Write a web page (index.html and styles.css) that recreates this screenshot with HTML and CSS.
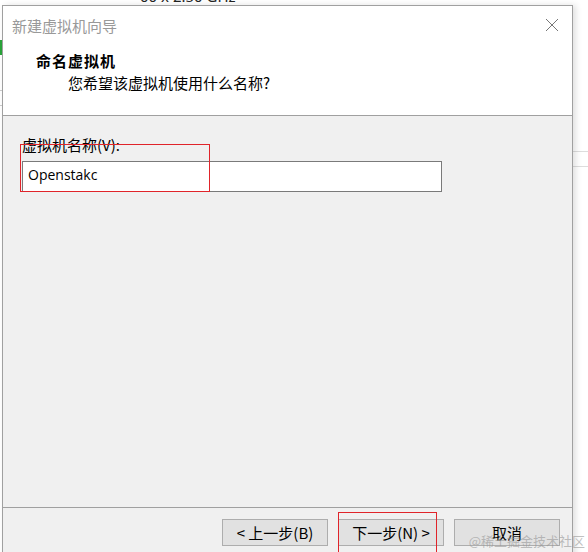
FILE: index.html
```
<!DOCTYPE html>
<html>
	<head>
		<meta charset="utf-8">
		<title>新建虚拟机向导</title>
		<link rel="stylesheet" href="styles.css">
	</head>
	<body>
		<!-- 后面的窗口 只露出一点边 -->
		<div class="behind">
			<div class="cpu">00 x 2.50 GHz</div>
			<div class="green"></div>
			<div class="line line1"></div>
			<div class="line line2"></div>
			<div class="rline rline1"></div>
			<div class="rline rline2"></div>
			<div class="mark">@稀土掘金技术社区</div>
		</div>

		<div class="wizard">
			<div class="wz_hd">
				<div class="title_bar">
					<span class="title">新建虚拟机向导</span>
					<svg class="close" width="14" height="14" viewBox="0 0 14 14">
						<path d="M1 1L13 13M13 1L1 13" stroke="#777" stroke-width="1" fill="none"/>
					</svg>
				</div>
				<h2>命名虚拟机</h2>
				<p>您希望该虚拟机使用什么名称?</p>
			</div>
			<div class="wz_bd">
				<label>虚拟机名称(V):</label>
				<div class="name_box">Openstakc</div>
				<div class="red red1"></div>
			</div>
			<div class="wz_ft">
				<button type="button">&lt; 上一步(B)</button>
				<button type="button">下一步(N) &gt;</button>
				<button type="button">取消</button>
				<div class="red red2"></div>
			</div>
		</div>
	</body>
</html>
```

FILE: styles.css
```
*{
	margin: 0;
	padding: 0;
	box-sizing: border-box;
}
body{
	width: 588px;
	height: 552px;
	overflow: hidden;
	position: relative;
	background-color: #fff;
	font-family: "Noto Sans", "Noto Sans CJK SC", sans-serif;
	color: #000;
}
.behind{
	position: absolute;
	top: 0;
	left: 0;
	width: 588px;
	height: 552px;
}
.cpu{
	position: absolute;
	top: -14px;
	left: 140px;
	font-size: 15px;
	color: #222;
}
.green{
	position: absolute;
	top: 40px;
	left: 0;
	width: 3px;
	height: 15px;
	background-color: #2aa43a;
}
.line{
	position: absolute;
	left: 0;
	width: 3px;
	height: 1px;
	background-color: #ccc;
}
.line1{ top: 90px; }
.line2{ top: 105px; }
.rline{
	position: absolute;
	left: 573px;
	width: 15px;
	height: 1px;
	background-color: #ddd;
}
.rline1{ top: 151px; }
.rline2{ top: 166px; }
.mark{
	position: absolute;
	right: 3px;
	bottom: 2px;
	z-index: 5;
	font-size: 13px;
	font-family: "Noto Sans CJK SC", serif;
	color: rgba(150,150,150,.6);
}

.wizard{
	position: absolute;
	top: 5px;
	left: 2px;
	width: 571px;
	height: 560px;
	display: flex;
	flex-direction: column;
	background-color: #f0f0f0;
	border: 1px solid #a0a0a0;
	box-shadow: 3px 0 6px rgba(0,0,0,.12);
}
.wz_hd{
	height: 110px;
	background-color: #fff;
	border-bottom: 1px solid #a0a0a0;
	padding-left: 33px;
}
.title_bar{
	display: flex;
	justify-content: space-between;
	align-items: center;
	height: 38px;
	margin-left: -24px;
	padding-right: 13px;
}
.title{
	font-size: 15px;
	color: #999;
	font-family: "Noto Sans CJK SC", sans-serif;
}
.close{
	display: block;
}
.wz_hd h2{
	font-size: 15px;
	font-weight: bold;
	line-height: 20px;
	margin-top: 7px;
	letter-spacing: 1px;
	font-family: "Noto Sans CJK SC", sans-serif;
}
.wz_hd p{
	font-size: 15px;
	line-height: 20px;
	margin-top: 2px;
	padding-left: 32px;
	font-family: "Noto Sans CJK SC", sans-serif;
}
.wz_bd{
	position: relative;
	flex: 0 0 392px;
	padding: 19px 0 0 19px;
	border-bottom: 1px solid #a0a0a0;
}
.wz_bd label{
	display: block;
	font-size: 15px;
	line-height: 20px;
	font-family: "Noto Sans CJK SC", sans-serif;
}
.name_box{
	width: 420px;
	height: 31px;
	margin-top: 6px;
	padding-left: 5px;
	background-color: #fff;
	border: 1px solid #7a7a7a;
	font-size: 14px;
	line-height: 26px;
	font-family: "Open Sans", "Noto Sans", sans-serif;
}
.red{
	position: absolute;
	border: 1px solid #e0242a;
}
.red1{
	top: 28px;
	left: 17px;
	width: 190px;
	height: 48px;
}
.wz_ft{
	position: relative;
	display: flex;
	gap: 10px;
	padding: 11px 0 0 219px;
}
.wz_ft button{
	width: 106px;
	height: 27px;
	background-color: #e1e1e1;
	border: 1px solid #adadad;
	font-size: 15px;
	font-family: "Noto Sans CJK SC", sans-serif;
	color: #000;
}
.red2{
	top: 4px;
	left: 335px;
	width: 99px;
	height: 60px;
}
```
